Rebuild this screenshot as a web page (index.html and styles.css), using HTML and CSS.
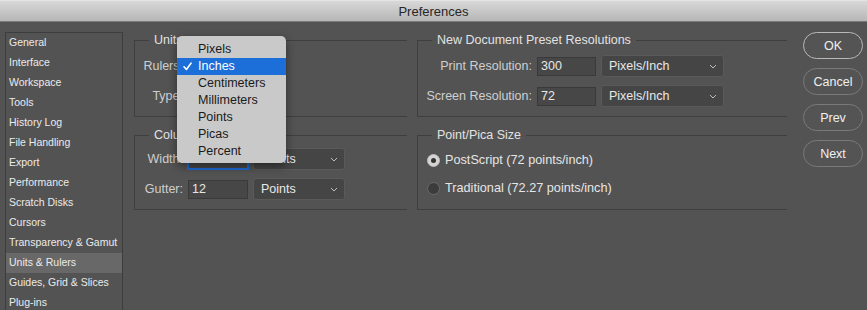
FILE: index.html
```html
<!DOCTYPE html>
<html lang="en">
<head>
  <meta charset="UTF-8" />
  <title>Preferences</title>
  <link rel="stylesheet" href="styles.css">
</head>
<body>
  <header class="titlebar">Preferences</header>

  <div class="main">
    <ul class="sidebar">
      <li>General</li>
      <li>Interface</li>
      <li>Workspace</li>
      <li>Tools</li>
      <li>History Log</li>
      <li>File Handling</li>
      <li>Export</li>
      <li>Performance</li>
      <li>Scratch Disks</li>
      <li>Cursors</li>
      <li>Transparency &amp; Gamut</li>
      <li class="active">Units &amp; Rulers</li>
      <li>Guides, Grid &amp; Slices</li>
      <li>Plug-ins</li>
    </ul>

    <div class="groups">
      <fieldset class="group units">
        <legend>Units</legend>
        <div class="row left-row">
          <label>Rulers:</label>
          <div class="menu">
            <div class="menu-item">Pixels</div>
            <div class="menu-item selected">
              <svg class="check" width="9" height="9" viewBox="0 0 9 9"><path d="M1 4.8 L3.4 7.4 L8 1.2" fill="none" stroke="#fff" stroke-width="1.6" stroke-linecap="round" stroke-linejoin="round"/></svg>
              Inches
            </div>
            <div class="menu-item">Centimeters</div>
            <div class="menu-item">Millimeters</div>
            <div class="menu-item">Points</div>
            <div class="menu-item">Picas</div>
            <div class="menu-item">Percent</div>
          </div>
        </div>
        <div class="row left-row">
          <label>Type:</label>
        </div>
      </fieldset>

      <fieldset class="group">
        <legend>New Document Preset Resolutions</legend>
        <div class="row right-row">
          <label>Print Resolution:</label>
          <div class="input">300</div>
          <div class="select">Pixels/Inch
            <svg class="chev" width="8" height="5" viewBox="0 0 8 5"><path d="M1 1 L4 4 L7 1" fill="none" stroke="#bdbdbd" stroke-width="1"/></svg>
          </div>
        </div>
        <div class="row right-row">
          <label>Screen Resolution:</label>
          <div class="input">72</div>
          <div class="select">Pixels/Inch
            <svg class="chev" width="8" height="5" viewBox="0 0 8 5"><path d="M1 1 L4 4 L7 1" fill="none" stroke="#bdbdbd" stroke-width="1"/></svg>
          </div>
        </div>
      </fieldset>

      <fieldset class="group columns">
        <legend>Column Size</legend>
        <div class="row left-row">
          <label>Width:</label>
          <div class="input focus">180</div>
          <div class="select">Points
            <svg class="chev" width="8" height="5" viewBox="0 0 8 5"><path d="M1 1 L4 4 L7 1" fill="none" stroke="#bdbdbd" stroke-width="1"/></svg>
          </div>
        </div>
        <div class="row left-row">
          <label>Gutter:</label>
          <div class="input">12</div>
          <div class="select">Points
            <svg class="chev" width="8" height="5" viewBox="0 0 8 5"><path d="M1 1 L4 4 L7 1" fill="none" stroke="#bdbdbd" stroke-width="1"/></svg>
          </div>
        </div>
      </fieldset>

      <fieldset class="group pica">
        <legend>Point/Pica Size</legend>
        <div class="radio-row">
          <span class="radio checked"></span>
          <span>PostScript (72 points/inch)</span>
        </div>
        <div class="radio-row">
          <span class="radio"></span>
          <span>Traditional (72.27 points/inch)</span>
        </div>
      </fieldset>
    </div>

    <div class="buttons">
      <button class="btn default">OK</button>
      <button class="btn">Cancel</button>
      <button class="btn">Prev</button>
      <button class="btn">Next</button>
    </div>
  </div>
</body>
</html>
```

FILE: styles.css
```css
* {
  margin: 0;
  padding: 0;
  box-sizing: border-box;
  font-family: 'Liberation Sans', Arial, sans-serif;
}

body {
  background: #535353;
  color: #dedede;
  height: 310px;
  overflow: hidden;
}

.titlebar {
  height: 22px;
  line-height: 21px;
  text-align: center;
  font-size: 13px;
  color: #262626;
  background: linear-gradient(to bottom, #d8d8d8, #b6b6b6);
  border-top: 1px solid #e4e4e4;
  border-bottom: 1px solid #7a7a7a;
}

.main {
  display: flex;
  align-items: flex-start;
  padding: 10px 0 0 5px;
}

/* left category list */
.sidebar {
  list-style: none;
  width: 118px;
  height: 278px;
  border: 1px solid #3d3d3d;
  border-bottom: none;
  flex-shrink: 0;
}

.sidebar li {
  height: 20px;
  line-height: 19px;
  padding-left: 3px;
  font-size: 10.5px;
  color: #ebebeb;
  white-space: nowrap;
}

.sidebar li.active {
  background: #686868;
}

/* group boxes */
.groups {
  display: grid;
  grid-template-columns: 273px 370px;
  column-gap: 10px;
  row-gap: 11px;
  margin: 1px 0 0 11px;
}

.group {
  border: 1px solid #3f3f3f;
  border-right: none;
  min-width: 0;
  padding: 7px 0 9px 0;
}

.group legend {
  margin-left: 14px;
  padding: 0 5px;
  font-size: 12.5px;
  line-height: 15px;
  color: #e2e2e2;
}

.group.columns {
  padding-top: 5px;
}

.row {
  display: grid;
  align-items: center;
  height: 22px;
  margin-bottom: 8px;
  position: relative;
}

.row:last-child {
  margin-bottom: 0;
}

.left-row {
  grid-template-columns: 48px 60px 92px;
  column-gap: 5px;
}

.right-row {
  grid-template-columns: 114px 59px 123px;
  column-gap: 5px;
}

.row label {
  text-align: right;
  font-size: 12.5px;
  color: #cfcfcf;
  white-space: nowrap;
}

.input {
  height: 19px;
  line-height: 17px;
  padding-left: 3px;
  background: #474747;
  border: 1px solid #3a3a3a;
  font-size: 12.5px;
  color: #e8e8e8;
}

.input.focus {
  border-color: #1d6ad4;
  box-shadow: 0 0 0 1px #1d6ad4;
}

.select {
  height: 22px;
  line-height: 20px;
  padding-left: 7px;
  background: #454545;
  border: 1px solid #5a5a5a;
  border-radius: 3px;
  font-size: 12.5px;
  color: #e8e8e8;
  position: relative;
}

.chev {
  position: absolute;
  right: 6px;
  top: 8px;
}

/* open popup menu over the Rulers select */
.menu {
  position: absolute;
  left: 42px;
  top: -19px;
  width: 109px;
  padding: 5px 0 3px;
  background: #c9c9c9;
  border-radius: 5px;
  box-shadow: 0 3px 10px rgba(0, 0, 0, 0.45);
  z-index: 2;
}

.menu-item {
  position: relative;
  height: 17px;
  line-height: 17px;
  padding-left: 21px;
  font-size: 12.5px;
  color: #1a1a1a;
}

.menu-item.selected {
  background: #1c6ed8;
  color: #fff;
}

.check {
  position: absolute;
  left: 6px;
  top: 4px;
}

/* radio group */
.radio-row {
  display: flex;
  align-items: center;
  height: 20px;
  margin: 0 0 8px 9px;
  font-size: 12.7px;
  color: #e6e6e6;
}

.radio-row:last-child {
  margin-bottom: 0;
}

.radio {
  width: 13px;
  height: 13px;
  border-radius: 50%;
  margin-right: 5px;
  background: #3c3c3c;
  border: 1px solid #6a6a6a;
  position: relative;
}

.radio.checked {
  background: #d4d4d4;
  border-color: #bdbdbd;
}

.radio.checked::after {
  content: "";
  position: absolute;
  left: 3px;
  top: 3px;
  width: 5px;
  height: 5px;
  border-radius: 50%;
  background: #333;
}

/* dialog buttons */
.buttons {
  display: flex;
  flex-direction: column;
  gap: 9px;
  margin-left: 16px;
}

.btn {
  width: 60px;
  height: 27px;
  border-radius: 14px;
  border: 1px solid #7a7a7a;
  background: #545454;
  color: #f0f0f0;
  font-size: 12.5px;
}

.btn.default {
  border: 1.5px solid #b8b8b8;
}
```
